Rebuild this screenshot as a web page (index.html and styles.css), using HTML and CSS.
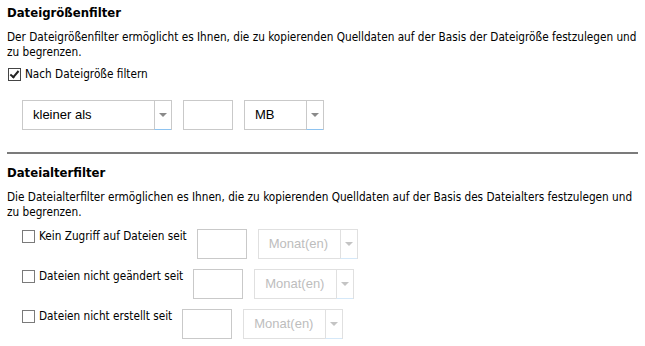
FILE: index.html
```html
<!DOCTYPE html>
<html lang="de">
  <head>
    <meta charset="UTF-8" />
    <title>Filter</title>
    <link rel="stylesheet" href="styles.css">
  </head>
  <body>
    <section class="filter">
      <h3>Dateigrößenfilter</h3>
      <p class="desc">Der Dateigrößenfilter ermöglicht es Ihnen, die zu kopierenden Quelldaten auf der Basis der Dateigröße festzulegen und zu begrenzen.</p>
      <label class="check"><span class="box checked"></span>Nach Dateigröße filtern</label>
      <div class="size-row">
        <div class="select wide"><span class="value">kleiner als</span><span class="arrow"></span></div>
        <div class="textbox"></div>
        <div class="select unit"><span class="value">MB</span><span class="arrow"></span></div>
      </div>
    </section>

    <hr class="divider">

    <section class="filter">
      <h3>Dateialterfilter</h3>
      <p class="desc">Die Dateialterfilter ermöglichen es Ihnen, die zu kopierenden Quelldaten auf der Basis des Dateialters festzulegen und zu begrenzen.</p>
      <div class="age-list">
        <div class="age-row">
          <label class="check"><span class="box"></span>Kein Zugriff auf Dateien seit</label>
          <div class="textbox"></div>
          <div class="select period disabled"><span class="value">Monat(en)</span><span class="arrow"></span></div>
        </div>
        <div class="age-row">
          <label class="check"><span class="box"></span>Dateien nicht geändert seit</label>
          <div class="textbox"></div>
          <div class="select period disabled"><span class="value">Monat(en)</span><span class="arrow"></span></div>
        </div>
        <div class="age-row">
          <label class="check"><span class="box"></span>Dateien nicht erstellt seit</label>
          <div class="textbox"></div>
          <div class="select period disabled"><span class="value">Monat(en)</span><span class="arrow"></span></div>
        </div>
      </div>
    </section>
  </body>
</html>
```

FILE: styles.css
```css
body {
  margin: 0;
  padding: 5px 7px 0 7px;
  background: #fff;
  color: #000;
  font-family: "DejaVu Sans Condensed", "DejaVu Sans", sans-serif;
  font-size: 11.7px;
}
h3 {
  margin: 0 0 9px 0;
  font-size: 13px;
  font-weight: bold;
  line-height: 16px;
}
.desc {
  margin: 0 0 7px 0;
  line-height: 15px;
  width: 634px;
}
.check {
  display: flex;
  align-items: flex-start;
  line-height: 15px;
}
.box {
  width: 11px;
  height: 11px;
  border: 1px solid #7a7a7a;
  background: #fff;
  margin: 1px 4px 0 1px;
  position: relative;
}
.box.checked {
  border-color: #444;
}
.box.checked::after {
  content: "";
  position: absolute;
  left: 3px;
  top: 0px;
  width: 3px;
  height: 7px;
  border: solid #222;
  border-width: 0 2px 2px 0;
  transform: rotate(40deg);
}
.size-row {
  display: flex;
  gap: 11px;
  margin: 18px 0 0 15px;
}
.select {
  display: flex;
  height: 28px;
  border: 1px solid #c9c9c9;
  background: #fff;
  font-family: "Liberation Sans", Arial, sans-serif;
  font-size: 13px;
}
.select .value {
  flex: 1;
  padding-left: 10px;
  line-height: 28px;
}
.select .arrow {
  width: 16px;
  border-left: 1px solid #c9c9c9;
  border-bottom: 1px solid #8ec3f0;
  margin-bottom: -1px;
  display: flex;
  align-items: center;
  justify-content: center;
}
.select .arrow::before {
  content: "";
  border-left: 4px solid transparent;
  border-right: 4px solid transparent;
  border-top: 4px solid #8a8a8a;
}
.select.wide {
  width: 148px;
}
.select.unit {
  width: 78px;
}
.select.period {
  width: 98px;
}
.select.disabled {
  border-color: #e0e0e0;
  color: #bdbdbd;
}
.select.disabled .arrow {
  border-left-color: #e0e0e0;
  border-bottom-color: #d5e8f8;
}
.select.disabled .arrow::before {
  border-top-color: #c4c4c4;
}
.textbox {
  width: 48px;
  height: 28px;
  border: 1px solid #c9c9c9;
  background: #fff;
}
.divider {
  border: 0;
  border-top: 2px solid #7b7b7b;
  margin: 22px 0 11px 0;
  width: 631px;
}
.age-list {
  display: flex;
  flex-direction: column;
  gap: 10px;
  margin: 9px 0 0 14px;
}
.age-row {
  display: flex;
  align-items: flex-start;
  gap: 11px;
}
.age-row .check {
  margin-right: -1px;
}
```
